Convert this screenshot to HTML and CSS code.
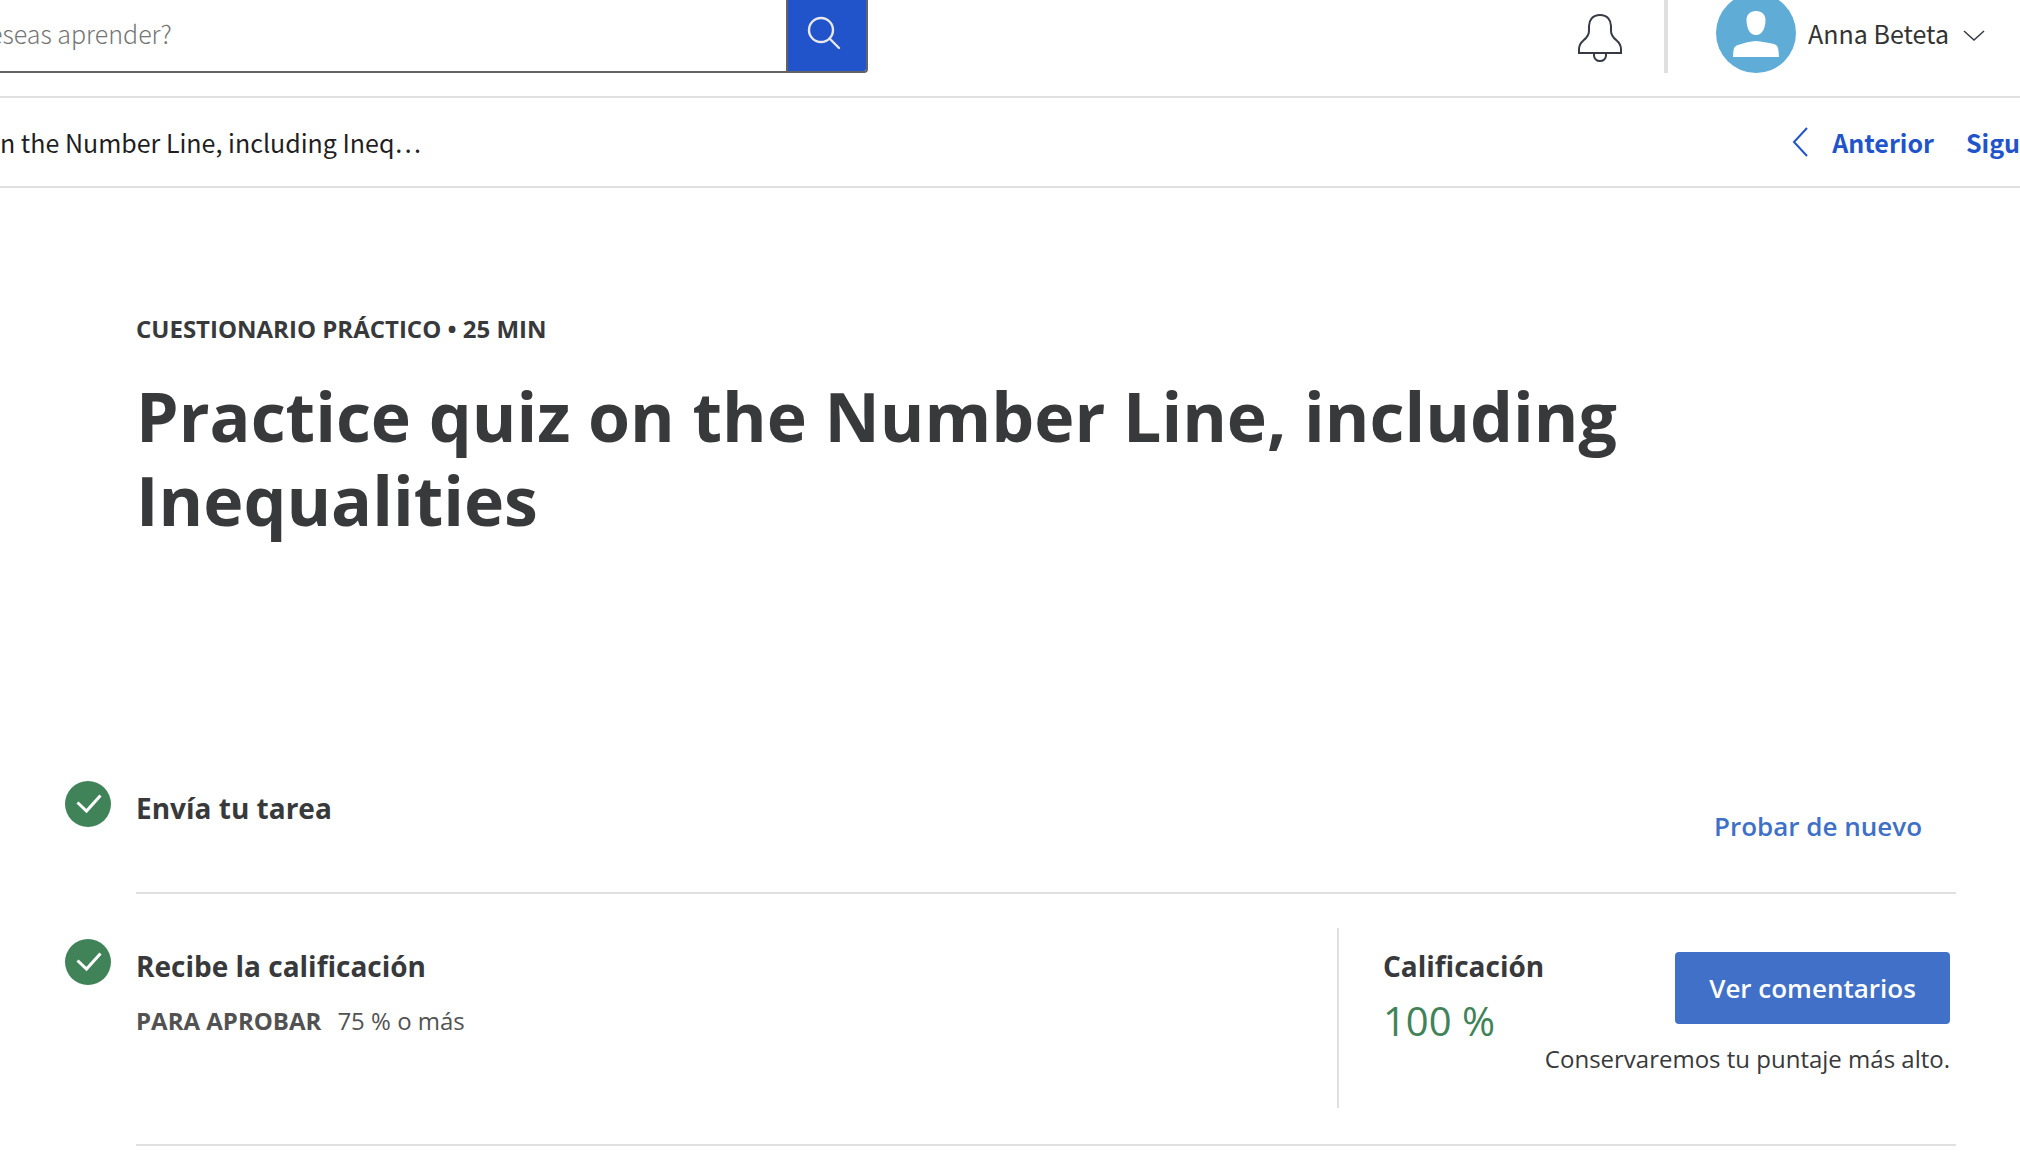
FILE: index.html
```html
<!DOCTYPE html>
<html lang="es">
<head>
<meta charset="utf-8">
<meta name="viewport" content="width=device-width, initial-scale=1">
<title>Practice quiz on the Number Line</title>
<link rel="stylesheet" href="styles.css">
</head>
<body>
<header class="topbar">
  <form class="search" role="search">
    <input class="search-input" type="text" aria-label="Buscar" placeholder="eseas aprender?">
    <button class="search-button" type="button" aria-label="Buscar">
      <svg width="34" height="34" viewBox="0 0 34 34" fill="none" stroke="#e8e8e8" stroke-width="2.4" stroke-linecap="round"><circle cx="14" cy="14" r="12"/><path d="M22.500 22.500L32 32"/></svg>
    </button>
  </form>
  <div class="account">
    <button class="icon-button" type="button" aria-label="Notificaciones">
      <svg width="44" height="48" viewBox="0 0 44 48" fill="none" stroke="#373a44" stroke-width="2"><path d="M22 1C14.500 1 11 6.500 11 12c0 6 .5 8-3 12-3.500 3.500-7 5-7 11v4h42v-4c0-6-3.500-7.500-7-11-3.500-4-3-6-3-12C33 6.500 29.500 1 22 1z"/><path d="M16 39v2.500a6 5.500 0 0 0 12 0V39"/></svg>
    </button>
    <button class="user" type="button">
      <svg class="avatar" width="80" height="80" viewBox="0 0 80 80"><circle cx="40" cy="40" r="40" fill="#5facd7"/><path fill="#fff" d="M40 18c6 0 10 4 9.500 10C49 36 46 42 40 42s-9-6-9.500-14C30 22 34 18 40 18zM17 64c.5-8 .5-10.500 5-12 7-2.500 12-3.500 18-4 6 .5 11 1.500 18 3 4.500 1.500 4.500 5 5 13z"/></svg>
      <span>Anna Beteta</span>
      <svg width="22" height="16" viewBox="0 0 22 16" fill="none" stroke="#373a44" stroke-width="1.500"><path d="M1 6l10 9L21 6"/></svg>
    </button>
  </div>
</header>
<nav class="itembar" aria-label="Lecciones">
  <span class="crumb">n the Number Line, including Ineq…</span>
  <div class="pager">
    <a class="pager-link" href="#anterior"><svg width="16" height="30" viewBox="0 0 16 30" fill="none" stroke="#2154cb" stroke-width="2"><path d="M15 1L2 15l13 14"/></svg>Anterior</a>
    <a class="pager-link" href="#siguiente">Sigu</a>
  </div>
</nav>
<main class="content">
  <p class="eyebrow">CUESTIONARIO PRÁCTICO • 25 MIN</p>
  <h1 class="title">Practice quiz on the Number Line, including Inequalities</h1>
  <section class="step">
    <svg class="check" width="46" height="46" viewBox="0 0 46 46"><circle cx="23" cy="23" r="23" fill="#418359"/><path d="M12.500 21.500l9 8.500 14-15.500" fill="none" stroke="#fff" stroke-width="3"/></svg>
    <div class="step-body">
      <h2 class="step-title">Envía tu tarea</h2>
      <button class="retry" type="button">Probar de nuevo</button>
    </div>
  </section>
  <section class="step">
    <svg class="check" width="46" height="46" viewBox="0 0 46 46"><circle cx="23" cy="23" r="23" fill="#418359"/><path d="M12.500 21.500l9 8.500 14-15.500" fill="none" stroke="#fff" stroke-width="3"/></svg>
    <div class="step-body">
      <div class="step-text">
        <h2 class="step-title">Recibe la calificación</h2>
        <p class="pass"><strong>PARA APROBAR</strong><span>75 % o más</span></p>
      </div>
      <div class="result">
        <div class="grade">
          <h2 class="step-title">Calificación</h2>
          <p class="score">100 %</p>
        </div>
        <div class="feedback">
          <button class="primary" type="button">Ver comentarios</button>
          <p class="note">Conservaremos tu puntaje más alto.</p>
        </div>
      </div>
    </div>
  </section>
</main>
</body>
</html>
```
FILE: styles.css
```css
* { box-sizing: border-box; }

body {
  margin: 0;
  background: #fff;
  color: #38393b;
  font-family: "Open Sans", sans-serif;
  overflow-x: hidden;
}

h1, h2, p { margin: 0; }

button {
  padding: 0;
  border: 0;
  background: none;
  color: inherit;
  font: inherit;
  cursor: pointer;
}

svg { display: block; flex: none; }

.topbar, .itembar {
  display: flex;
  align-items: center;
  justify-content: space-between;
  border-bottom: 2px solid #e0e0e0;
  font-family: "Noto Sans CJK SC", "Noto Sans", sans-serif;
  font-size: 25px;
}

/* The bar is scrolled slightly past the top edge */
.topbar {
  margin-top: -7px;
  padding: 0 35px 23px 0;
}

.search {
  display: flex;
  flex: 0 1 868px;
  height: 80px;
  border: 2px solid #636363;
  border-left: 0;
  border-radius: 0 4px 4px 0;
  overflow: hidden;
}

.search-input {
  flex: 1;
  min-width: 0;
  margin-left: -11px;
  padding: 0;
  border: 0;
  font: inherit;
  font-weight: 300;
}

.search-input::placeholder { color: #757575; opacity: 1; }

.search-button {
  display: flex;
  align-items: center;
  width: 80px;
  padding-left: 19px;
  border-left: 2px solid #636363;
  background: #2154cb;
}

.account { display: flex; align-items: center; gap: 42px; }

.icon-button { padding-top: 10px; }

.user {
  display: flex;
  align-items: center;
  gap: 12px;
  padding-left: 48px;
  border-left: 4px solid #e0e0e0;
  color: #333;
}

.user span { margin-right: 2px; }

.itembar { height: 90px; color: #1f1f1f; }

.pager { display: flex; gap: 32px; }

.pager-link {
  display: flex;
  align-items: center;
  gap: 24px;
  color: #2154cb;
  font-weight: 700;
  text-decoration: none;
}

.content { padding: 123px 64px 0 65px; }

.eyebrow, .title { margin-left: 71px; }

.eyebrow {
  font-size: 24px;
  font-weight: 700;
  line-height: 36px;
}

.title {
  max-width: 1600px;
  margin-top: 27px;
  margin-bottom: 228px;
  font-size: 68px;
  line-height: 84px;
}

.step { display: flex; gap: 25px; }

.check { margin-top: 11px; }

.step-body {
  display: flex;
  flex: 1;
  justify-content: space-between;
  margin-bottom: 34px;
  border-bottom: 2px solid #e0e0e0;
}

.step-title {
  font-size: 28px;
  line-height: 36px;
  padding-top: 20px;
}

.retry {
  height: 72px;
  margin: 20px 34px 30px 0;
  color: #3f70c8;
  font-size: 26px;
  font-weight: 600;
}

.pass {
  display: flex;
  gap: 16px;
  margin-top: 19px;
  color: #525252;
  font-size: 24px;
  line-height: 36px;
}

.result {
  display: flex;
  justify-content: space-between;
  width: 619px;
  height: 180px;
  margin-bottom: 36px;
  padding: 0 6px 0 44px;
  border-left: 2px solid #e0e0e0;
}

.grade { flex: 0 0 0; white-space: nowrap; }

.score {
  margin-top: 10px;
  color: #418359;
  font-size: 40px;
  line-height: 54px;
}

.feedback {
  display: flex;
  flex-direction: column;
  align-items: flex-end;
  padding-top: 24px;
}

.primary {
  width: 275px;
  height: 72px;
  border-radius: 4px;
  background: #4070c8;
  color: #fff;
  font-size: 26px;
  font-weight: 600;
}

.note {
  margin-top: 17px;
  font-size: 24px;
  line-height: 36px;
  white-space: nowrap;
}
```
